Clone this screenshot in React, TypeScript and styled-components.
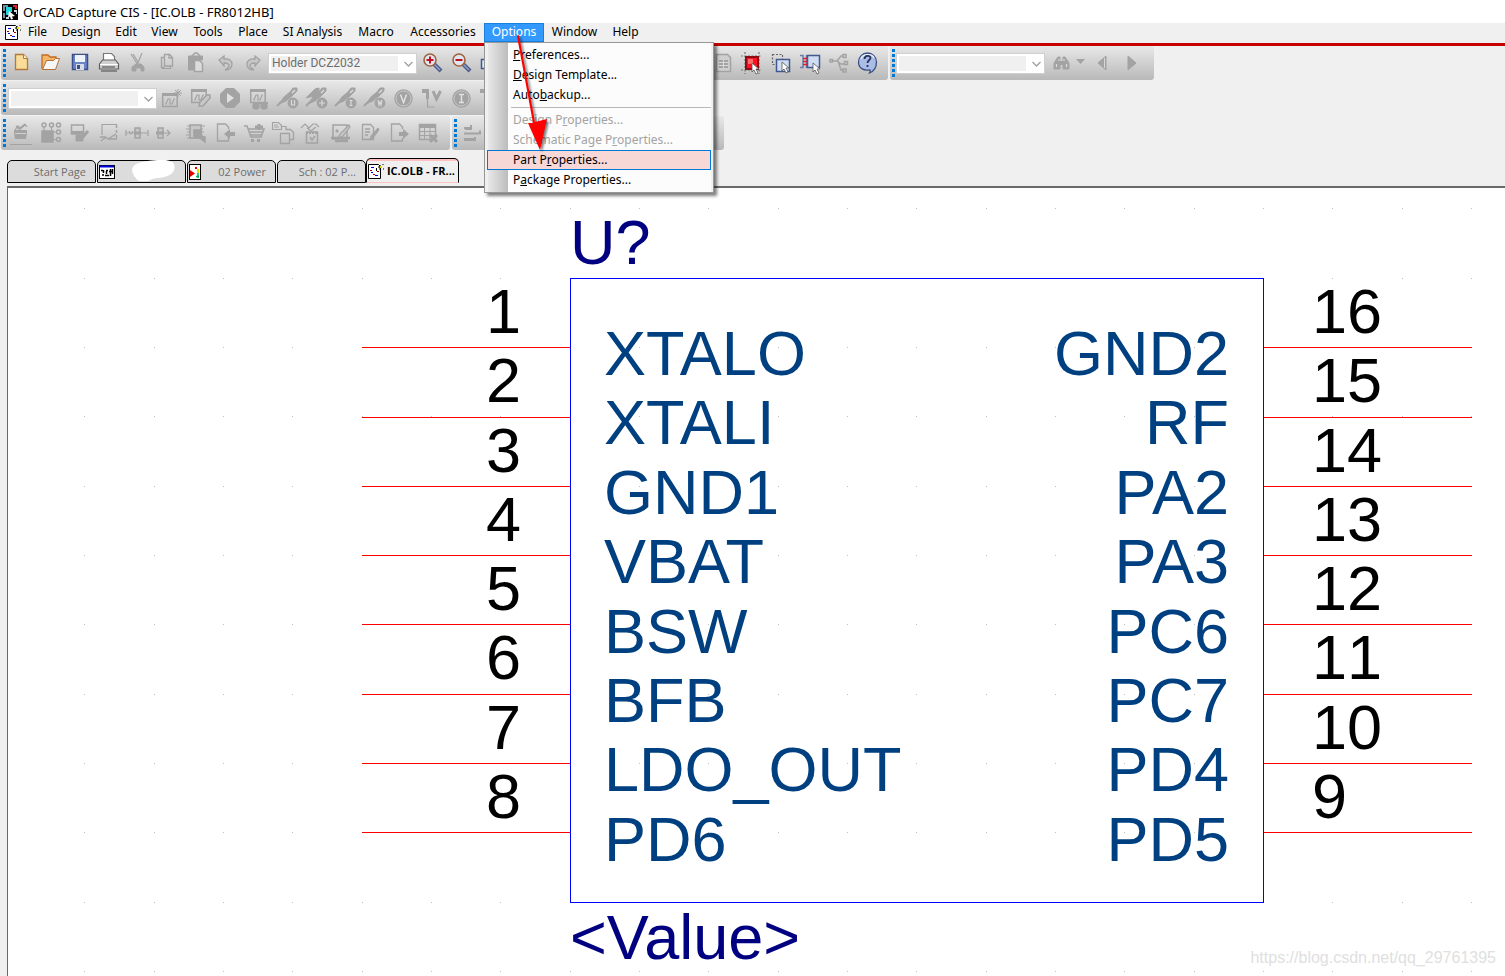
import React from "react";
import styled, { createGlobalStyle } from "styled-components";

const GlobalStyle = createGlobalStyle`
  * { box-sizing: border-box; }
  body { margin: 0; background: #f0f0f0; }
  button, select { font: inherit; color: inherit; margin: 0; }
`;

const uiFont = `"Noto Sans", "Open Sans", sans-serif`;
const drawFont = `"Liberation Sans", Arial, sans-serif`;

const Window = styled.div`
  min-height: 100vh;
  display: flex;
  flex-direction: column;
  background: #f0f0f0;
  font-family: ${uiFont};
  font-size: 12px;
  color: #000;
  overflow-x: hidden;
`;

const TitleBar = styled.header`
  height: 23px;
  display: flex;
  align-items: center;
  gap: 5px;
  padding-left: 2px;
  background: #fff;
  white-space: nowrap;
`;

const Title = styled.h1`
  margin: 0;
  font-size: 13px;
  font-weight: 400;
`;

const MenuBar = styled.nav`
  height: 23px;
  display: flex;
  align-items: flex-start;
  padding-left: 5px;
  border-bottom: 3px solid #c80000;
`;

const MenuIcon = styled.span`
  width: 16px;
  height: 17px;
  display: flex;
  align-items: center;
`;

const MenuSlot = styled.div`
  position: relative;
`;

const MenuButton = styled.button<{ $width: number; $open?: boolean }>`
  width: ${(p) => p.$width}px;
  height: 19px;
  padding: 0 0 2px;
  border: 0;
  line-height: 17px;
  text-align: center;
  white-space: nowrap;
  background: ${(p) => (p.$open ? "#3399ff" : "transparent")};
  color: ${(p) => (p.$open ? "#fff" : "#000")};
  box-shadow: ${(p) => (p.$open ? "inset 0 0 0 1px #1a80dd" : "none")};
`;

const Popup = styled.div`
  position: absolute;
  z-index: 5;
  top: 100%;
  left: 0;
  width: 230px;
  padding: 2px;
  border: 1px solid #979797;
  background: linear-gradient(to right, #f0f0f0 3px, #e8e8e8 3px, #bcbcbc 23px, #fcfcfc 23px, #fcfcfc 226px, #f0f0f0 226px);
  box-shadow: 3px 3px 3px rgba(0, 0, 0, 0.5);
`;

const PopupItem = styled.button<{ $hot?: boolean }>`
  display: block;
  width: 100%;
  height: 20px;
  padding: 0 0 0 25px;
  border: 1px solid ${(p) => (p.$hot ? "#0078d7" : "transparent")};
  background: ${(p) => (p.$hot ? "#f8d7d7" : "transparent")};
  line-height: 18px;
  text-align: left;
  white-space: nowrap;
  color: #000;
  &:disabled { color: #a3a3a3; }
`;

const PopupRule = styled.hr`
  height: 1px;
  margin: 2px 0 2px 24px;
  border: 0;
  background: #b9b9b9;
`;

const Pointer = styled.svg`
  position: absolute;
  z-index: 6;
  left: 24px;
  top: 8px;
  pointer-events: none;
  filter: drop-shadow(2px 2px 1px rgba(0, 0, 0, 0.5));
`;

const ToolbarRow = styled.div`
  height: 35px;
  display: flex;
  gap: 2px;
  padding: 0 0 1px 1px;
`;

const Toolbar = styled.div<{ $end: number }>`
  display: flex;
  align-items: center;
  flex: none;
  padding: 0 ${(p) => p.$end}px 0 2px;
  border-radius: 3px;
  background: linear-gradient(#e8e8e8, #b9b9b9);
`;

const Grip = styled.span<{ $gap: number }>`
  width: 3px;
  height: 28px;
  margin-right: ${(p) => p.$gap}px;
  background: repeating-linear-gradient(#0078d7 0 3px, transparent 3px 5px);
`;

const Tool = styled.button<{ $narrow?: boolean }>`
  width: ${(p) => (p.$narrow ? 17 : 29)}px;
  height: 34px;
  flex: none;
  padding: 0;
  border: 0;
  background: transparent;
  svg { display: block; }
`;

const Separator = styled.span`
  width: 2px;
`;

const Combo = styled.span`
  position: relative;
  display: flex;
  width: 149px;
  flex: none;
  svg {
    position: absolute;
    right: 3px;
    top: 7px;
    pointer-events: none;
  }
`;

const ComboSelect = styled.select`
  width: 100%;
  height: 21px;
  appearance: none;
  padding: 0 20px 0 1px;
  border: 3px solid #fff;
  border-radius: 0;
  outline: 1px solid #cfcfcf;
  outline-offset: -1px;
  background: linear-gradient(to right, #f0f0f0 127px, #fff 127px);
  font-family: Roboto, sans-serif;
  font-size: 12px;
  line-height: 15px;
  color: #6d6d6d;
  opacity: 1;
`;

const TabStrip = styled.div`
  height: 35px;
  display: flex;
  align-items: flex-end;
  padding: 0 0 3px 7px;
`;

const Tab = styled.button<{ $active?: boolean }>`
  width: ${(p) => (p.$active ? 93 : 89)}px;
  height: ${(p) => (p.$active ? 25 : 23)}px;
  flex: none;
  display: flex;
  align-items: center;
  gap: 2px;
  margin: 0 1px 0 ${(p) => (p.$active ? -1 : 0)}px;
  padding: ${(p) => (p.$active ? "0 3px 0 1px" : "0 9px 0 1px")};
  border: 1px solid #000;
  border-radius: 5px 5px 0 0;
  border-bottom-color: ${(p) => (p.$active ? "transparent" : "#000")};
  background: ${(p) => (p.$active ? "linear-gradient(#ffc0c0 2px, #f0f0f0 2px)" : "#dcdcdc")};
  color: ${(p) => (p.$active ? "#000" : "#6d6d6d")};
  font-family: "Open Sans", sans-serif;
  font-size: 11px;
  font-weight: ${(p) => (p.$active ? 700 : 400)};
  white-space: nowrap;
`;

const TabLabel = styled.span`
  flex: 1;
  text-align: right;
  line-height: 16px;
`;

const Canvas = styled.main`
  position: relative;
  flex: 1;
  margin-left: 7px;
  padding: 20px 0 0 354px;
  border-top: 2px solid #696969;
  border-left: 1px solid #696969;
  background: #fff;
  font-family: ${drawFont};
  font-size: 63px;
  line-height: 68px;
`;

const GridDots = styled.svg`
  position: absolute;
  inset: 0;
  width: 100%;
  height: 100%;
`;

const Part = styled.section`
  position: relative;
  display: grid;
  grid-template-columns: 208px 694px 208px;
  white-space: nowrap;
`;

const PartText = styled.div`
  grid-column: 2 / 4;
  height: 70px;
  color: #000080;
`;

const PinList = styled.ol<{ $side: "left" | "right" }>`
  height: 554px;
  margin: 1px 0 0;
  padding: 0;
  list-style: none;
  display: flex;
  flex-direction: column;
  text-align: ${(p) => (p.$side === "left" ? "right" : "left")};
`;

const Pin = styled.li`
  flex: 1;
  padding: 0 49px 0 48px;
  border-bottom: 1px solid #ff0000;
  line-height: 64px;
  font-kerning: none;
`;

const Body = styled.div`
  height: 625px;
  display: flex;
  justify-content: space-between;
  padding: 40px 34px 0 33px;
  border: 1px solid #0000ff;
  color: #004080;
`;

const NameList = styled.ul<{ $align: "left" | "right" }>`
  height: 555px;
  margin: 0;
  padding: 0;
  list-style: none;
  display: flex;
  flex-direction: column;
  text-align: ${(p) => p.$align};
`;

const PinName = styled.li`
  flex: 1;
`;

const Watermark = styled.span`
  position: absolute;
  right: 9px;
  bottom: 8px;
  font-size: 16px;
  line-height: 20px;
  color: #e0e0e0;
`;

/* Toolbar glyphs: every drawing fills a 29 x 34 button face. */
const G = "#a3a3a3";

const Face = ({ children }: { children?: React.ReactNode }) => (
  <svg width="29" height="34" viewBox="0 0 29 34" fill="none" stroke={G} strokeWidth="1.5" aria-hidden="true">
    {children}
  </svg>
);

const Wave = ({ x, y }: { x: number; y: number }) => (
  <g transform={`translate(${x} ${y})`}>
    <rect x="0.7" y="1" width="14.5" height="12.5" />
    <path d="M0 1.5h16" strokeWidth="3" />
    <path d="M3 11h1l2-5h2v5h2l2-5h1" strokeWidth="1.2" />
  </g>
);

const Probe = ({ letter }: { letter: string }) => (
  <>
    <path d="M4 25l4-4" strokeWidth="2" />
    <path d="M6 23l5-7 6-5 3-4 4 0 0 3-5 5-6 5z" fill={G} strokeWidth="1" />
    <path d="M19 12l3-3" stroke="#dadada" strokeWidth="1.500" />
    <circle cx="20" cy="22" r="5" fill={G} strokeWidth="1" />
    <path d={letter} stroke="#dadada" strokeWidth="1.2" />
  </>
);

const cursor = <path d="M0 0v9l2-2 2 4 2-1-2-4h3z" fill="#fff" stroke="#555" strokeWidth="0.8" />;

const art: Record<string, React.ReactNode> = {
  new: (
    <>
      <path d="M8.500 8.500h8l4 4v11h-12z" fill="#f8dc98" stroke="#b4783c" strokeWidth="1.3" />
      <path d="M16.500 8.500v4h4" fill="#fff3cf" stroke="#b4783c" strokeWidth="1" />
    </>
  ),
  open: (
    <>
      <path d="M6 23V9h6l2 2h6v4" fill="#f3b56a" stroke="#c66c24" strokeWidth="1.3" />
      <path d="M6.500 23.500l4-9h7l2-2h4l-4 11z" fill="#f7f7f7" stroke="#b86d33" strokeWidth="1" />
    </>
  ),
  save: (
    <>
      <rect x="7.500" y="8.500" width="15" height="15" fill="#6b84c8" stroke="#3b4f8c" />
      <rect x="10" y="9" width="10" height="7" fill="#eef2fb" stroke="none" />
      <rect x="11" y="18" width="8" height="6" fill="#d7dbe4" stroke="none" />
      <rect x="12" y="19" width="3" height="4" fill="#3b4f8c" stroke="none" />
    </>
  ),
  print: (
    <>
      <path d="M9.500 15V7.500h8l3 3V15" fill="#fff" stroke="#777" strokeWidth="1.2" />
      <path d="M5.500 18l3-4h13l3 4v5h-19z" fill="#d0d0d0" stroke="#606060" strokeWidth="1.2" />
      <path d="M6 18.500h18" stroke="#fff" strokeWidth="1" />
      <path d="M8 21h13M7 25h16" stroke="#707070" strokeWidth="1.500" />
    </>
  ),
  cut: (
    <>
      <path d="M8 8l7 11M19 7l-5 12M10 8l5 8" strokeWidth="1.200" />
      <path d="M9 25v-4l4-3h5l3 3v4h-3v-3h-5v3z" fill={G} strokeWidth="1" />
    </>
  ),
  copy: (
    <>
      <path d="M12 11.500H9.500v10h3" strokeWidth="1.300" />
      <path d="M12.500 8.500h5l3 3v8.500h-8zM17 8.500v3.500h3.500" strokeWidth="1.300" />
      <path d="M10 22.500h8.500v-2" strokeWidth="1.200" />
    </>
  ),
  paste: (
    <>
      <path d="M7.500 10h14v4h-8v10h-6z" fill={G} strokeWidth="1" />
      <path d="M11 10l3-3h2l3 3" strokeWidth="1.500" />
      <path d="M13.500 14.500h5l3 3v8h-8z" fill="#dcdcdc" />
    </>
  ),
  undo: <path d="M9 14l5-4v3c5-1 8 2 8 5 0 4-3 6-7 6 4-2 5-5 3-6-1-1-2-1-4-1v3z" fill="#c6c6c6" strokeWidth="1.300" />,
  redo: <path d="M21 14l-5-4v3c-5-1-8 2-8 5 0 4 3 6 7 6-4-2-5-5-3-6 1-1 2-1 4-1v3z" fill="#c6c6c6" strokeWidth="1.300" />,
  zoomIn: (
    <>
      <path d="M17 18l7 7" stroke="#4d5c86" strokeWidth="4" />
      <path d="M17 18l6 6" stroke="#8fa0cc" strokeWidth="1.500" />
      <circle cx="13" cy="14" r="6" fill="#dfe6f4" stroke="#a4623c" strokeWidth="1.600" />
      <path d="M13 10.500v7M9.500 14h7" stroke="#c0101c" strokeWidth="2" />
    </>
  ),
  zoomOut: (
    <>
      <path d="M17 18l7 7" stroke="#4d5c86" strokeWidth="4" />
      <path d="M17 18l6 6" stroke="#8fa0cc" strokeWidth="1.500" />
      <circle cx="13" cy="14" r="6" fill="#dfe6f4" stroke="#a4623c" strokeWidth="1.600" />
      <path d="M9.500 14h7" stroke="#c0101c" strokeWidth="2" />
    </>
  ),
  region: <rect x="6.500" y="13.500" width="15" height="9" fill="#dfe6f4" stroke="#42588f" />,
  sheet: (
    <>
      <path d="M7.500 8.500h11l3 3v14h-14z" fill="#cfcfcf" />
      <rect x="10" y="14" width="9" height="8" fill={G} stroke="none" />
      <path d="M10 16.500h9M10 19.500h9M14.500 14v8" stroke="#dadada" strokeWidth="1" />
    </>
  ),
  snap: (
    <>
      <path d="M3 10h21M3 24h21M7 6v22M21 6v22" stroke="#777" strokeWidth="1.200" strokeDasharray="2 1.500" />
      <rect x="8" y="11" width="12" height="12" fill="#ff1122" stroke="#8e0b14" strokeWidth="2" />
      <rect x="10" y="13" width="5" height="5" fill="#ff6a6a" stroke="none" />
      <g transform="translate(14 17)">{cursor}</g>
    </>
  ),
  area: (
    <>
      <rect x="5.500" y="8.500" width="10" height="10" stroke="#666" strokeDasharray="2 1.500" strokeWidth="1.200" />
      <rect x="9.500" y="13.500" width="13" height="12" fill="#cfdcf2" stroke="#42588f" />
      <g transform="translate(15 16)">{cursor}</g>
    </>
  ),
  drag: (
    <>
      <path d="M4 9.500h3v12H4M10.500 9v13" stroke="#6b7ba8" />
      <path d="M7 12.500h4M7 15.500h4M7 18.500h4" stroke="#ff1122" strokeWidth="1.300" />
      <rect x="11.500" y="9.500" width="12" height="12" fill="#cfdcf2" stroke="#42588f" />
      <g transform="translate(17 17)">{cursor}</g>
    </>
  ),
  tree: (
    <>
      <path d="M8 15h4l4-5h3M12 15l4 3h4M13 15l3 9h3" />
      <rect x="5" y="13.500" width="2.500" height="2.500" />
      <rect x="18" y="8.500" width="3" height="3" />
      <rect x="19.500" y="15.500" width="3" height="3" />
      <rect x="18" y="23" width="3" height="3" />
    </>
  ),
  help: (
    <>
      <path d="M13.500 7c5 0 9 4 9 9 0 4-2 9-7 11 1-2 1-3 0-3-6 1-11-2-11-8 0-5 4-9 9-9z" fill="#a9bce6" stroke="#3c4f82" strokeWidth="1.300" />
      <path d="M7 13c1-5 11-6 13-1" stroke="#e4ecfb" />
      <path d="M10.500 13c0-4 6-4 6-1 0 2-3 2-3 5M13.500 19v2" stroke="#27345c" strokeWidth="1.800" />
    </>
  ),
  find: (
    <>
      <path d="M9 23v-6l4-6h2v12zM18 23V11h2l4 6v6z" fill={G} strokeWidth="1" />
      <path d="M11.500 18v3M21.500 18v3M14 13v2M19 13v2" stroke="#dadada" strokeWidth="1.200" />
      <path d="M14 17h5" strokeWidth="4" />
    </>
  ),
  drop: <path d="M2 13h9l-4.500 5z" fill={G} stroke="none" />,
  prev: (
    <>
      <path d="M15 10v14l-8-7z" fill={G} strokeWidth="1" />
      <path d="M13.500 12v10" stroke="#d6d6d6" strokeWidth="1" />
    </>
  ),
  next: <path d="M8 10l8 7-8 7z" fill={G} strokeWidth="1" />,
  simNew: (
    <>
      <Wave x={5} y={12} />
      <path d="M21 8v8M17 12h8M18 9l6 6M24 9l-6 6" strokeWidth="1" />
    </>
  ),
  simEdit: (
    <>
      <Wave x={5} y={8} />
      <path d="M13 25l1-4 7-7h3v3l-7 8z" fill="#c8c8c8" />
    </>
  ),
  run: (
    <>
      <path d="M11 7h8l6 6v8l-6 6h-8l-6-6v-8z" fill={G} stroke="none" />
      <path d="M12 12v10l7-5z" fill="#e0e0e0" stroke="none" />
    </>
  ),
  simView: (
    <>
      <Wave x={6} y={8} />
      <circle cx="12" cy="25" r="3" fill={G} />
      <circle cx="20" cy="25" r="3" fill={G} />
      <path d="M9 22h15" strokeWidth="2" />
    </>
  ),
  probeU: <Probe letter="M18.500 19v5h3v-5" />,
  probePlus: (
    <>
      <path d="M4 17l4-4 5-5 4-1v3l-5 5z" fill={G} strokeWidth="1" />
      <Probe letter="M20 19v6M17 22h6" />
    </>
  ),
  probeI: <Probe letter="M18.500 19.500h3M20 19.500v5M18.500 24.500h3" />,
  probeW: <Probe letter="M18 19l1 5 1-3 1 3 1-5" />,
  biasV: (
    <>
      <circle cx="14.500" cy="17.500" r="8.500" fill={G} />
      <circle cx="14.500" cy="17.500" r="7.500" stroke="#c9c9c9" strokeWidth="1" />
      <path d="M11.500 13.500l3 8 3-8" stroke="#e0e0e0" />
    </>
  ),
  pinV: (
    <>
      <path d="M4 8h7v10h-3v-6H4z" fill={G} stroke="none" />
      <path d="M9.500 17v9h7" strokeWidth="1.200" />
      <path d="M15 10l3.500 8 4-8" strokeWidth="3" />
    </>
  ),
  biasI: (
    <>
      <circle cx="14.500" cy="17.500" r="8.500" fill={G} />
      <circle cx="14.500" cy="17.500" r="7.500" stroke="#c9c9c9" strokeWidth="1" />
      <path d="M12 13.500h5M14.500 13.500v8M12 21.500h5" stroke="#e0e0e0" />
    </>
  ),
  basket: (
    <>
      <path d="M8 14l3-4 2 2 5-4M12 14l6-5M9 10l3 3M18 8l2 3" strokeWidth="1.200" />
      <path d="M7 14h13v3l-1 6H8l-1-6z" fill={G} stroke="none" />
      <path d="M8 17.500h11" stroke="#d0d0d0" strokeWidth="1" />
      <path d="M3 28.500h22" strokeWidth="1" />
    </>
  ),
  array: (
    <>
      <rect x="6" y="15" width="11" height="11" fill={G} />
      <circle cx="8" cy="9" r="2" /><circle cx="15.500" cy="9" r="2" /><circle cx="22.500" cy="9" r="2" />
      <circle cx="22.500" cy="16" r="2" /><circle cx="22.500" cy="23.500" r="2" />
      <path d="M8 11v4M15.500 11v3M17 16h3M17 23.500h3" strokeWidth="1.200" />
    </>
  ),
  partCheck: (
    <>
      <rect x="6.500" y="9" width="12" height="9" />
      <path d="M6 16.500h12M14 19l3 3 6-7" strokeWidth="3" />
      <path d="M11 19h7v6h-7z" fill={G} strokeWidth="1" />
    </>
  ),
  frame: (
    <>
      <path d="M8 19V8.500h15" strokeWidth="1.200" />
      <path d="M22.500 9v14" strokeDasharray="3 2" />
      <path d="M6 21h5l3 2 8-5M7 25l5-4M14 23h9" strokeWidth="1.300" />
    </>
  ),
  chain: (
    <>
      <path d="M3 14v6M25 14v6M3 17h22M6 15l2 3 2-3" strokeWidth="1.200" />
      <rect x="12" y="12" width="5" height="10" fill="#c6c6c6" />
      <path d="M11 17h7" strokeWidth="3" />
    </>
  ),
  chainEnd: (
    <>
      <path d="M4 17h14M15 14l3 3-3 3" strokeWidth="1.200" />
      <rect x="6" y="12" width="5" height="10" fill="#c6c6c6" />
      <path d="M4 17h8" strokeWidth="3" />
    </>
  ),
  chip: (
    <>
      <path d="M6 10h18M5 13h17M6 16h17M5 19h17M6 22h15" strokeWidth="1.200" />
      <rect x="9" y="9" width="11" height="13" fill="#c6c6c6" />
      <rect x="13" y="14" width="7" height="7" fill={G} />
      <path d="M16 20l8 6v-5z" fill={G} />
    </>
  ),
  importPage: (
    <>
      <path d="M18.500 13v-2l-3-3H7.500v17h11v-4" strokeWidth="1.300" />
      <path d="M14 18l6-5v3h5v4h-5v3z" fill={G} stroke="none" />
    </>
  ),
  cart: (
    <>
      <path d="M5 10h3l4 11h10l3-8H9M11 16h13M12 19h11" />
      <path d="M16 11h8M20 8v6" strokeWidth="3" />
      <path d="M12 24.500h3M18 24.500h3" strokeWidth="3" />
    </>
  ),
  link: (
    <>
      <path d="M4.500 6.500h6l3 3v4h-9zM6 9h4M6 11h5" strokeWidth="1.200" />
      <path d="M13 10.500h5v3" strokeWidth="1.200" />
      <path d="M12.500 17.500h9v10h-9zM17.500 13.500h5l3 3v7h-4" strokeWidth="1.300" />
    </>
  ),
  notes: (
    <>
      <path d="M4 12l4-4 4 4 4-4h3l3 3M10 12l4 3 5-4" strokeWidth="1.200" />
      <rect x="9.500" y="16" width="11" height="11" />
      <path d="M9 17h12" strokeWidth="2" strokeDasharray="2 1" />
      <path d="M13 21l2 3 3-4" />
    </>
  ),
  editChart: (
    <>
      <rect x="7" y="9" width="14" height="14" />
      <path d="M5 22h19M9 25h13M10 14l2 2" strokeWidth="2.500" />
      <path d="M23 9l-9 9-2 4 5-2 7-9z" fill="#c6c6c6" strokeWidth="1.200" />
    </>
  ),
  editPage: (
    <>
      <path d="M7.500 8.500h8l3 3v12h-11zM10 13h5M10 16h5M10 19h3" strokeWidth="1.300" />
      <path d="M23 12l-7 8-1 4 3-2 6-8z" fill={G} strokeWidth="1" />
    </>
  ),
  exportPage: (
    <>
      <path d="M18.500 13v-2l-3-3H7.500v17h11v-3" strokeWidth="1.300" />
      <path d="M15 16h4v-3l6 5-6 5v-3h-4z" fill={G} stroke="none" />
    </>
  ),
  tableCut: (
    <>
      <rect x="6.500" y="8.500" width="16" height="15" />
      <path d="M6 10h16" strokeWidth="4" />
      <path d="M6 15.500h16M6 19.500h16M11.500 9v14M17 9v14" strokeWidth="1" />
      <path d="M17 19l7 7M24 19l-7 7" strokeWidth="3" />
    </>
  ),
  align: <path d="M7 13h6V9M6 12h6M6 17.500h16v-3M6 24h11v-3M6 23h11" strokeWidth="2" />,
};

const ToolButton = ({ name }: { name: string }) => (
  <Tool type="button" aria-label={name} $narrow={name === "drop"}>
    <Face>{art[name]}</Face>
  </Tool>
);

const Tools = ({ names }: { names: string[] }) => (
  <>
    {names.map((n, i) => (
      <ToolButton key={n + i} name={n} />
    ))}
  </>
);

const ComboBox = ({ label, value = "" }: { label: string; value?: string }) => (
  <Combo>
    <ComboSelect aria-label={label} disabled defaultValue={value}>
      <option value={value}>{value}</option>
    </ComboSelect>
    <svg width="11" height="8" viewBox="0 0 11 8" fill="none" stroke="#a0a0a0" strokeWidth="1.300">
      <path d="M1.500 2l4 4 4-4" />
    </svg>
  </Combo>
);

const AppLogo = () => (
  <svg width="16" height="16" viewBox="0 0 16 16" aria-hidden="true">
    <rect width="16" height="16" fill="#000" />
    <path d="M1 1h5v2H3v4H1zM1 9h2v5H1z" fill="#6f8fa6" />
    <path d="M4 3h6v5H7v3H4z" fill="#22d3d8" />
    <path d="M7 7l6 5-3 .5 1 2.500-2 .5-1-3-2 1z" fill="#fff" />
    <path d="M11 1h4v4h-2V3h-2z" fill="#e02030" />
    <path d="M12 6h3v4h-1V8h-2zM4 13h3v2H4z" fill="#cfd8dc" />
  </svg>
);

const LibraryIcon = () => (
  <svg width="16" height="16" viewBox="0 0 16 16" aria-hidden="true">
    <path d="M.5 1.500h10l2 2v12H.5z" fill="#fff" stroke="#000" />
    <path d="M3 4.500h3M7 12.500h3M3 9.500h2" stroke="#0000e0" />
    <path d="M2 7.500h2M9 8.500h2M5 11.500h2" stroke="#a00000" />
    <path d="M8.500 5v3" stroke="#000" />
    <path d="M10 4h4M12 2v5M15 1v1M15 6h1" stroke="#000" />
    <path d="M12 3h2v2h-2z" fill="#e8e000" />
  </svg>
);

const ProjectIcon = () => (
  <svg width="16" height="14" viewBox="0 0 16 14" aria-hidden="true">
    <rect x=".5" y=".5" width="15" height="13" fill="#fff" stroke="#000" />
    <path d="M1 1.500h14" stroke="#0000e0" strokeWidth="2" />
    <path d="M2 5.500h2M4.500 5v3M3 10h2M7 5.500h2M7.500 6v3M6 10.500h4M11.500 4v7M13.500 4v5M10 6.500h4" stroke="#000" strokeWidth="1.500" fill="none" />
  </svg>
);

const SchematicIcon = () => (
  <svg width="12" height="16" viewBox="0 0 12 16" aria-hidden="true">
    <rect x=".5" y=".5" width="11" height="15" fill="#fff" stroke="#000" />
    <path d="M1 6l5 3.500L1 13z" fill="#e00000" />
    <path d="M6 3h2v2H6z" fill="#e00000" />
    <path d="M8 5h2v4H8z" fill="#e8e000" />
    <path d="M9 9v5M7 12.500h3" stroke="#00b050" strokeWidth="1.500" />
  </svg>
);

const Scribble = () => (
  <svg width="49" height="22" viewBox="0 0 49 22" aria-hidden="true">
    <path d="M7 13C4 6 16 4 25 3c9-1 20-2 21 4 1 5-4 9-11 10-5 1-7 0-11 2-5 3-12 3-14-1-2-1-2-3-3-5z" fill="#fff" stroke="#fff" strokeWidth="3" />
  </svg>
);

const menus: [string, number][] = [
  ["File", 33], ["Design", 54], ["Edit", 36], ["View", 41], ["Tools", 46], ["Place", 44],
  ["SI Analysis", 75], ["Macro", 52], ["Accessories", 82], ["Options", 60], ["Window", 61], ["Help", 41],
];

const leftPins = ["XTALO", "XTALI", "GND1", "VBAT", "BSW", "BFB", "LDO_OUT", "PD6"];
const rightPins = ["GND2", "RF", "PA2", "PA3", "PC6", "PC7", "PD4", "PD5"];

const OptionsMenu = () => (
  <>
    <Popup role="menu">
      <PopupItem role="menuitem"><u>P</u>references...</PopupItem>
      <PopupItem role="menuitem"><u>D</u>esign Template...</PopupItem>
      <PopupItem role="menuitem">Auto<u>b</u>ackup...</PopupItem>
      <PopupRule />
      <PopupItem role="menuitem" disabled>Design P<u>r</u>operties...</PopupItem>
      <PopupItem role="menuitem" disabled>Schematic Page P<u>r</u>operties...</PopupItem>
      <PopupItem role="menuitem" $hot>Part P<u>r</u>operties...</PopupItem>
      <PopupItem role="menuitem">P<u>a</u>ckage Properties...</PopupItem>
    </Popup>
    <Pointer width="50" height="130" viewBox="0 0 50 130" aria-hidden="true">
      <path d="M9 5l2-1 16 87 12-3-7 31-12-27 5 0z" fill="#ff0000" />
    </Pointer>
  </>
);

const Dots = () => {
  const steps = [0, 69, 138];
  return (
    <GridDots aria-hidden="true">
      <defs>
        <pattern id="grid" x="146" y="90" width="208" height="208" patternUnits="userSpaceOnUse">
          {steps.map((x) => steps.map((y) => <rect key={`${x}-${y}`} x={x} y={y} width="1" height="1" fill="#c0c0c0" />))}
        </pattern>
      </defs>
      <rect x="60" width="100%" height="100%" fill="url(#grid)" />
    </GridDots>
  );
};

export default function App() {
  return (
    <Window>
      <GlobalStyle />
      <TitleBar>
        <AppLogo />
        <Title>OrCAD Capture CIS - [IC.OLB - FR8012HB]</Title>
      </TitleBar>
      <MenuBar>
        <MenuIcon><LibraryIcon /></MenuIcon>
        {menus.map(([label, width]) => (
          <MenuSlot key={label}>
            <MenuButton type="button" $width={width} $open={label === "Options"}>{label}</MenuButton>
            {label === "Options" && <OptionsMenu />}
          </MenuSlot>
        ))}
      </MenuBar>

      <ToolbarRow>
        <Toolbar $end={5}>
          <Grip $gap={1} />
          <Tools names={["new", "open", "save", "print", "cut", "copy", "paste", "undo", "redo"]} />
          <ComboBox label="Part" value="Holder DCZ2032" />
          <Tools names={["zoomIn", "zoomOut", "region", "area", "sheet", "tree", "chip", "find", "array", "editPage"]} />
          <Separator />
          <Tools names={["sheet", "snap", "area", "drag", "tree", "help"]} />
        </Toolbar>
        <Toolbar $end={5}>
          <Grip $gap={1} />
          <ComboBox label="Find" />
          <Tools names={["find", "drop", "prev", "next"]} />
        </Toolbar>
      </ToolbarRow>
      <ToolbarRow>
        <Toolbar $end={5}>
          <Grip $gap={2} />
          <ComboBox label="Simulation profile" />
          <Tools names={["simNew", "simEdit", "run", "simView", "probeU", "probePlus", "probeI", "probeW", "biasV", "pinV", "biasI", "pinV"]} />
        </Toolbar>
      </ToolbarRow>
      <ToolbarRow>
        <Toolbar $end={8}>
          <Grip $gap={1} />
          <Tools names={["basket", "array", "partCheck", "frame", "chain", "chainEnd", "chip", "importPage", "cart", "link", "notes", "editChart", "editPage", "exportPage", "tableCut"]} />
        </Toolbar>
        <Toolbar $end={5}>
          <Grip $gap={1} />
          <Tools names={["align", "align", "align", "align", "align", "align", "align", "align", "align"]} />
        </Toolbar>
      </ToolbarRow>

      <TabStrip role="tablist">
        <Tab role="tab"><TabLabel>Start Page</TabLabel></Tab>
        <Tab role="tab" aria-label="Project"><ProjectIcon /><TabLabel><Scribble /></TabLabel></Tab>
        <Tab role="tab"><SchematicIcon /><TabLabel>02 Power</TabLabel></Tab>
        <Tab role="tab"><TabLabel>Sch : 02 P...</TabLabel></Tab>
        <Tab role="tab" aria-selected $active><LibraryIcon /><TabLabel>IC.OLB - FR...</TabLabel></Tab>
      </TabStrip>

      <Canvas>
        <Dots />
        <Part>
          <PartText>U?</PartText>
          <PinList $side="left">
            {leftPins.map((name, i) => <Pin key={name}>{i + 1}</Pin>)}
          </PinList>
          <Body>
            <NameList $align="left">{leftPins.map((n) => <PinName key={n}>{n}</PinName>)}</NameList>
            <NameList $align="right">{rightPins.map((n) => <PinName key={n}>{n}</PinName>)}</NameList>
          </Body>
          <PinList $side="right">
            {rightPins.map((name, i) => <Pin key={name}>{16 - i}</Pin>)}
          </PinList>
          <PartText>&lt;Value&gt;</PartText>
        </Part>
        <Watermark>https://blog.csdn.net/qq_29761395</Watermark>
      </Canvas>
    </Window>
  );
}
